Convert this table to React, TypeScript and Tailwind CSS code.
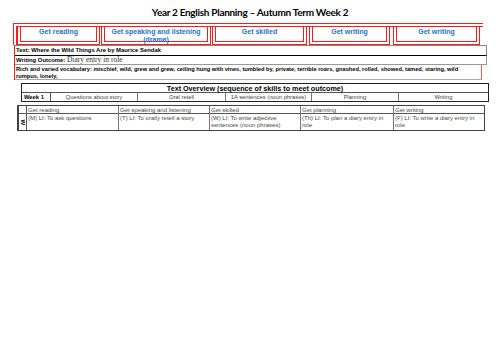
import React from "react";

const boxes = [
  { title: "Get reading", w: "w-[83px]", gap: "ml-0" },
  { title: "Get speaking and listening (drama)", w: "w-[110px]", gap: "ml-[1px]" },
  { title: "Get skilled", w: "w-[95px]", gap: "ml-[1px]" },
  { title: "Get writing", w: "w-[81px]", gap: "ml-[2px]" },
  { title: "Get writing", w: "w-[87px]", gap: "ml-[3px]" },
];

const overview = [
  { text: "Questions about story", w: "w-[87px]" },
  { text: "Oral retell", w: "w-[88px]" },
  { text: "1A sentences (noun phrases)", w: "w-[86px]" },
  { text: "Planning", w: "w-[87px]" },
  { text: "Writing", w: "flex-1" },
];

const lessons = [
  { head: "Get reading", body: "(M) LI: To ask questions", w: "w-[92px]" },
  { head: "Get speaking and listening", body: "(T) LI: To orally retell a story", w: "w-[91px]" },
  { head: "Get skilled", body: "(W) LI: To write adjective sentences (noun phrases)", w: "w-[91px]" },
  { head: "Get planning", body: "(Th) LI: To plan a diary entry in role", w: "w-[93px]" },
  { head: "Get writing", body: "(F) LI: To write a diary entry in role", w: "flex-1" },
];

export default function App() {
  return (
    <div className="w-[500px] h-[353px] bg-white font-['Liberation_Sans',Arial,sans-serif] text-black overflow-hidden">
      <div className="h-[23px] pt-[5px] text-center font-['Lato',sans-serif] font-bold text-[10px] leading-[14px] tracking-[-0.3px]">
        Year 2 English Planning – Autumn Term Week 2
      </div>

      {/* red skill boxes */}
      <div className="ml-[13px] w-[470px] border-t-4 border-l-4 border-double border-[#ff1a1a]">
        <div className="flex">
          {boxes.map((b, i) => (
            <div
              key={i}
              className={`${b.w} ${b.gap} h-[18px] border-x-4 border-b-4 border-double border-[#ff1a1a] text-center text-[#2474cc] font-bold text-[7px] leading-[8px] pt-[1px] px-[2px]`}
            >
              {b.title}
            </div>
          ))}
        </div>
      </div>

      {/* text rows */}
      <div className="ml-[14px] w-[473px] border-l border-[#ff1a1a]">
        <div className="h-[11px] border-t border-b border-r border-[#888] border-b-black flex items-end pl-[1px] pb-[1px] font-bold text-[5.9px] leading-[7px]">
          Text: Where the Wild Things Are by Maurice Sendak
        </div>
        <div className="h-[9px] border-b border-r border-[#999] flex items-center pl-[1px] leading-[8px]">
          <span className="font-bold text-[5.9px]">Writing Outcome:&nbsp;</span>
          <span className="font-['Liberation_Serif',serif] text-[7.5px] text-[#333]">Diary entry in role</span>
        </div>
        <div className="w-[467px] h-[15px] border-b border-r border-[#aaa] border-r-[#ff5a5a] pl-[1px] pt-[1px] font-bold text-[5.7px] leading-[6.5px]">
          Rich and varied vocabulary: mischief, wild, grew and grew, ceiling hung with vines, tumbled by, private, terrible roars, gnashed, rolled, showed, tamed, staring, wild rumpus, lonely,
        </div>
      </div>

      {/* text overview */}
      <div className="ml-[21px] mt-[3px] w-[468px] border border-[#222]">
        <div className="h-[9px] text-center font-bold text-[7.2px] leading-[9px] border-b border-[#555]">
          Text Overview (sequence of skills to meet outcome)
        </div>
        <div className="flex h-[8px] text-[5.8px] leading-[8px] text-[#444]">
          <div className="w-[29px] border-r border-[#555] pl-[2px] font-bold text-black">Week 1</div>
          {overview.map((o, i) => (
            <div key={i} className={`${o.w} ${i < 4 ? "border-r border-[#777]" : ""} text-center`}>
              {o.text}
            </div>
          ))}
        </div>
      </div>

      {/* lessons table */}
      <div className="ml-[17px] mt-[3px] w-[468px] border border-l-2 border-[#444] flex text-[6px] leading-[6.5px] text-[#4a4a4a]">
        <div className="w-[8px] flex flex-col border-r border-[#555]">
          <div className="h-[8px] border-b border-[#555]" />
          <div className="flex-1 flex items-center justify-center">
            <span className="rotate-90 font-bold text-[6px] text-black">W</span>
          </div>
        </div>
        {lessons.map((l, i) => (
          <div key={i} className={`${l.w} flex flex-col ${i < 4 ? "border-r border-[#777]" : ""}`}>
            <div className="h-[8px] border-b border-[#555] pl-[1px] pt-[1px]">{l.head}</div>
            <div className="h-[16px] pl-[1px] pt-[1px]">{l.body}</div>
          </div>
        ))}
      </div>
    </div>
  );
}
